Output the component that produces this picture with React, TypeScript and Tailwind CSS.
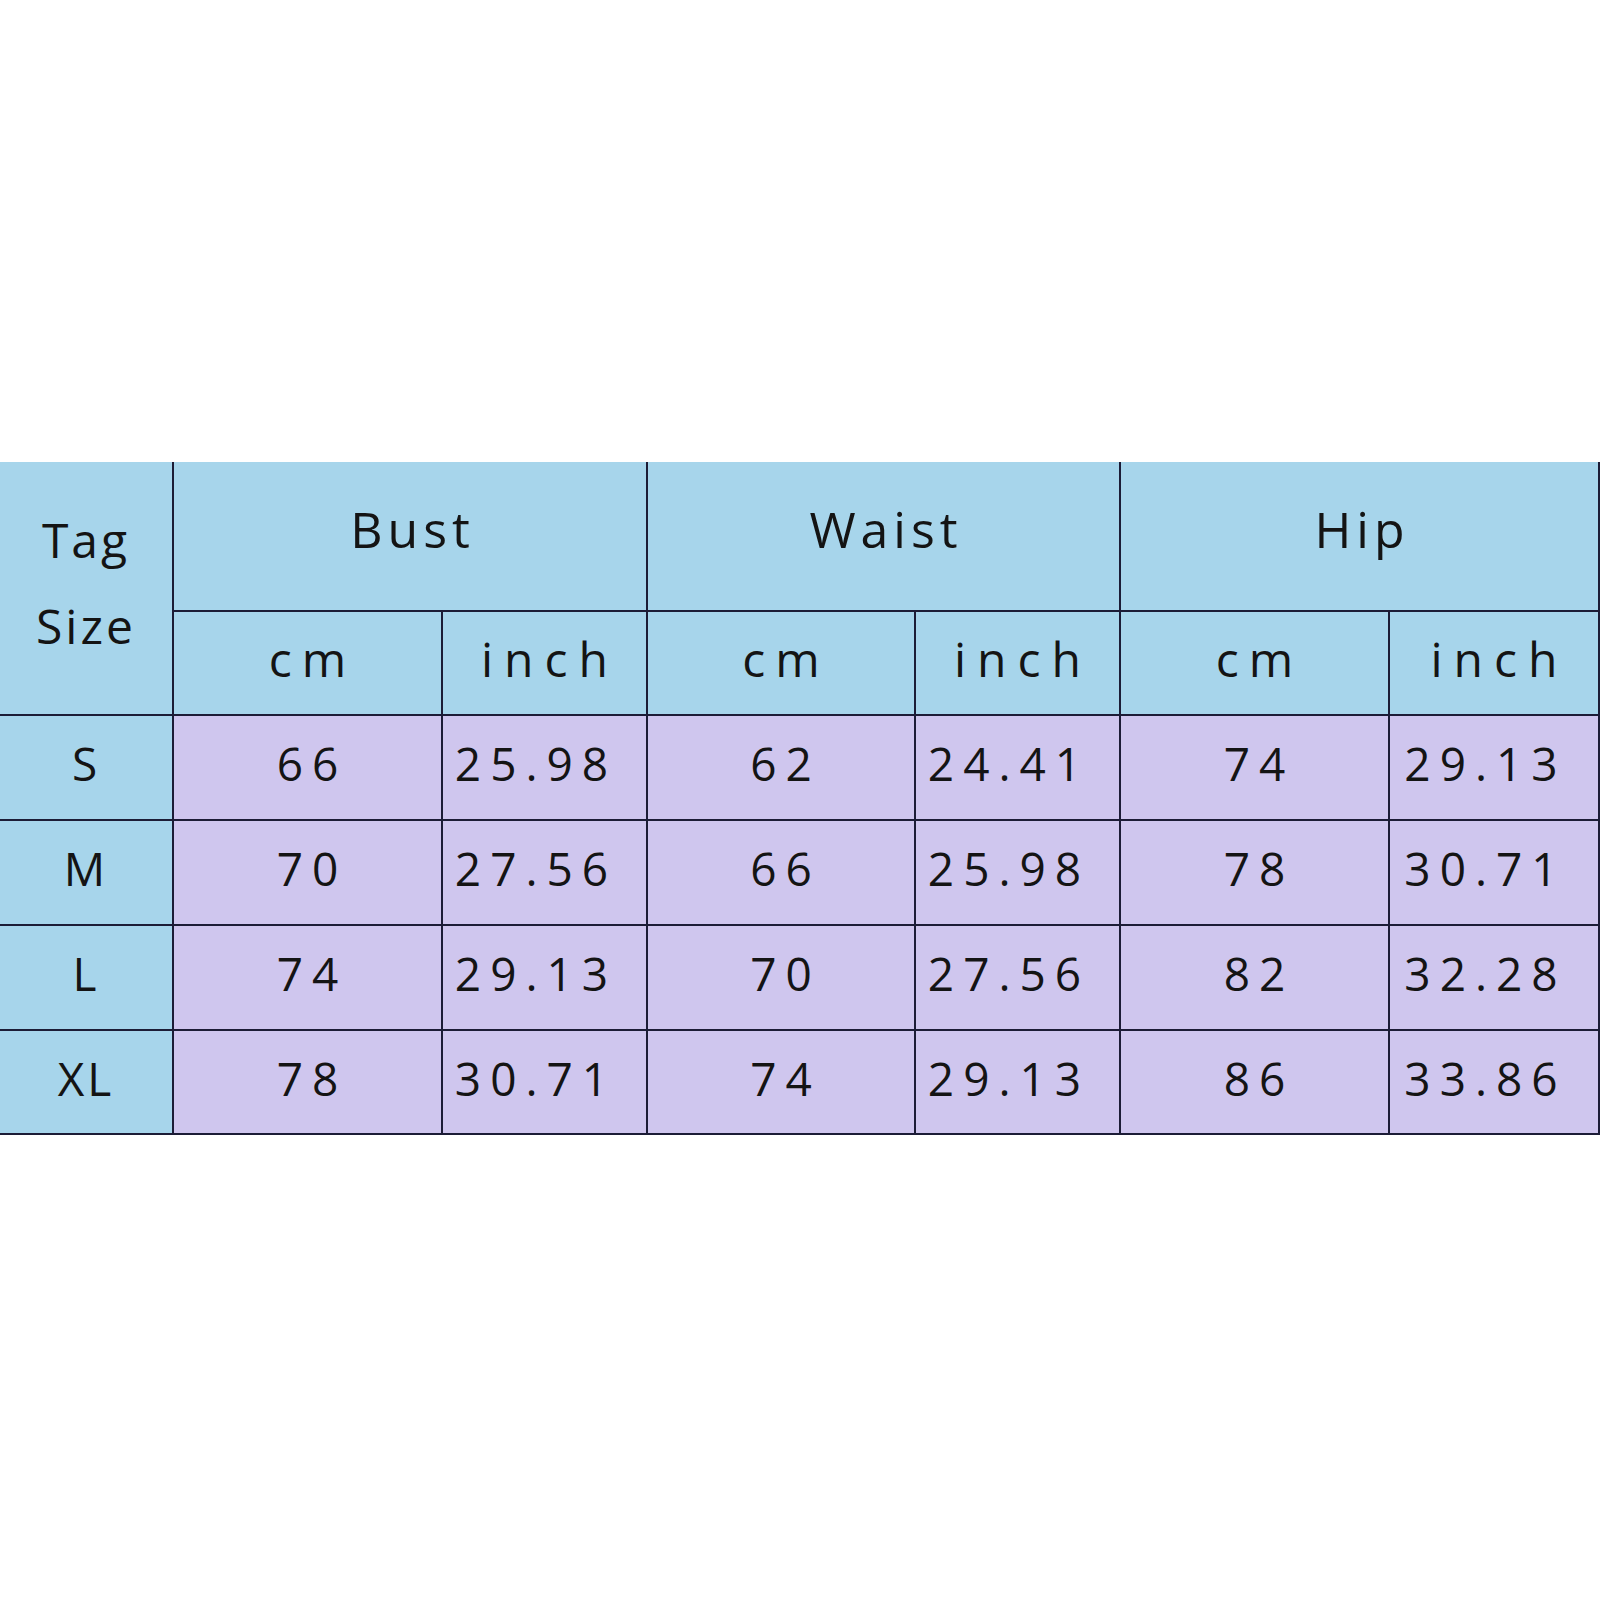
import React from "react";

/* ================= DATA ================= */
type SizeRow = {
  tag: string;
  bust: [string, string];
  waist: [string, string];
  hip: [string, string];
};

const rows: SizeRow[] = [
  { tag: "S", bust: ["66", "25.98"], waist: ["62", "24.41"], hip: ["74", "29.13"] },
  { tag: "M", bust: ["70", "27.56"], waist: ["66", "25.98"], hip: ["78", "30.71"] },
  { tag: "L", bust: ["74", "29.13"], waist: ["70", "27.56"], hip: ["82", "32.28"] },
  { tag: "XL", bust: ["78", "30.71"], waist: ["74", "29.13"], hip: ["86", "33.86"] },
];

const font = { fontFamily: '"Open Sans", "DejaVu Sans", sans-serif' };

/* ================= CELLS ================= */
const HeadCell = ({
  children,
  className = "",
}: {
  children: React.ReactNode;
  className?: string;
}) => (
  <div
    className={`bg-[#a7d5eb] flex items-center justify-center text-[#141414] ${className}`}
  >
    {children}
  </div>
);

const DataCell = ({ value, inch }: { value: string; inch?: boolean }) => (
  <div
    className={`bg-[#cfc6ee] flex items-center justify-center text-[#141414] text-[46px] tracking-[9px] pb-[8px] ${
      inch ? "pl-[9px] pr-[26px]" : "pl-[9px]"
    }`}
  >
    {value}
  </div>
);

/* ================= SIZE CHART ================= */
export default function App() {
  return (
    <div className="w-[1600px] h-[1600px] bg-white pt-[462px]" style={font}>
      <div className="grid grid-cols-[172px_267px_203px_266px_203px_267px_208px] grid-rows-[148px_102px_103px_103px_103px_102px] gap-[2px] bg-[#1c1c36] pr-[2px] pb-[2px] w-[1600px]">
        {/* Tag Size */}
        <HeadCell className="row-span-2 flex-col text-[48px] leading-[86px] tracking-[3px] pb-[10px]">
          <span>Tag</span>
          <span>Size</span>
        </HeadCell>

        {/* Group headers */}
        <HeadCell className="col-span-2 text-[50px] tracking-[5px] pl-[5px] pb-[14px]">Bust</HeadCell>
        <HeadCell className="col-span-2 text-[50px] tracking-[5px] pl-[5px] pb-[14px]">Waist</HeadCell>
        <HeadCell className="col-span-2 text-[50px] tracking-[5px] pl-[5px] pb-[14px]">Hip</HeadCell>

        {/* Units */}
        {["Bust", "Waist", "Hip"].map((g) => (
          <React.Fragment key={g}>
            <HeadCell className="text-[48px] tracking-[10px] pl-[10px] pb-[8px]">cm</HeadCell>
            <HeadCell className="text-[48px] tracking-[11px] pl-[11px] pb-[8px]">inch</HeadCell>
          </React.Fragment>
        ))}

        {/* Rows */}
        {rows.map((r) => (
          <React.Fragment key={r.tag}>
            <HeadCell className="text-[46px] tracking-[3px] pb-[8px]">{r.tag}</HeadCell>
            <DataCell value={r.bust[0]} />
            <DataCell value={r.bust[1]} inch />
            <DataCell value={r.waist[0]} />
            <DataCell value={r.waist[1]} inch />
            <DataCell value={r.hip[0]} />
            <DataCell value={r.hip[1]} inch />
          </React.Fragment>
        ))}
      </div>
    </div>
  );
}
